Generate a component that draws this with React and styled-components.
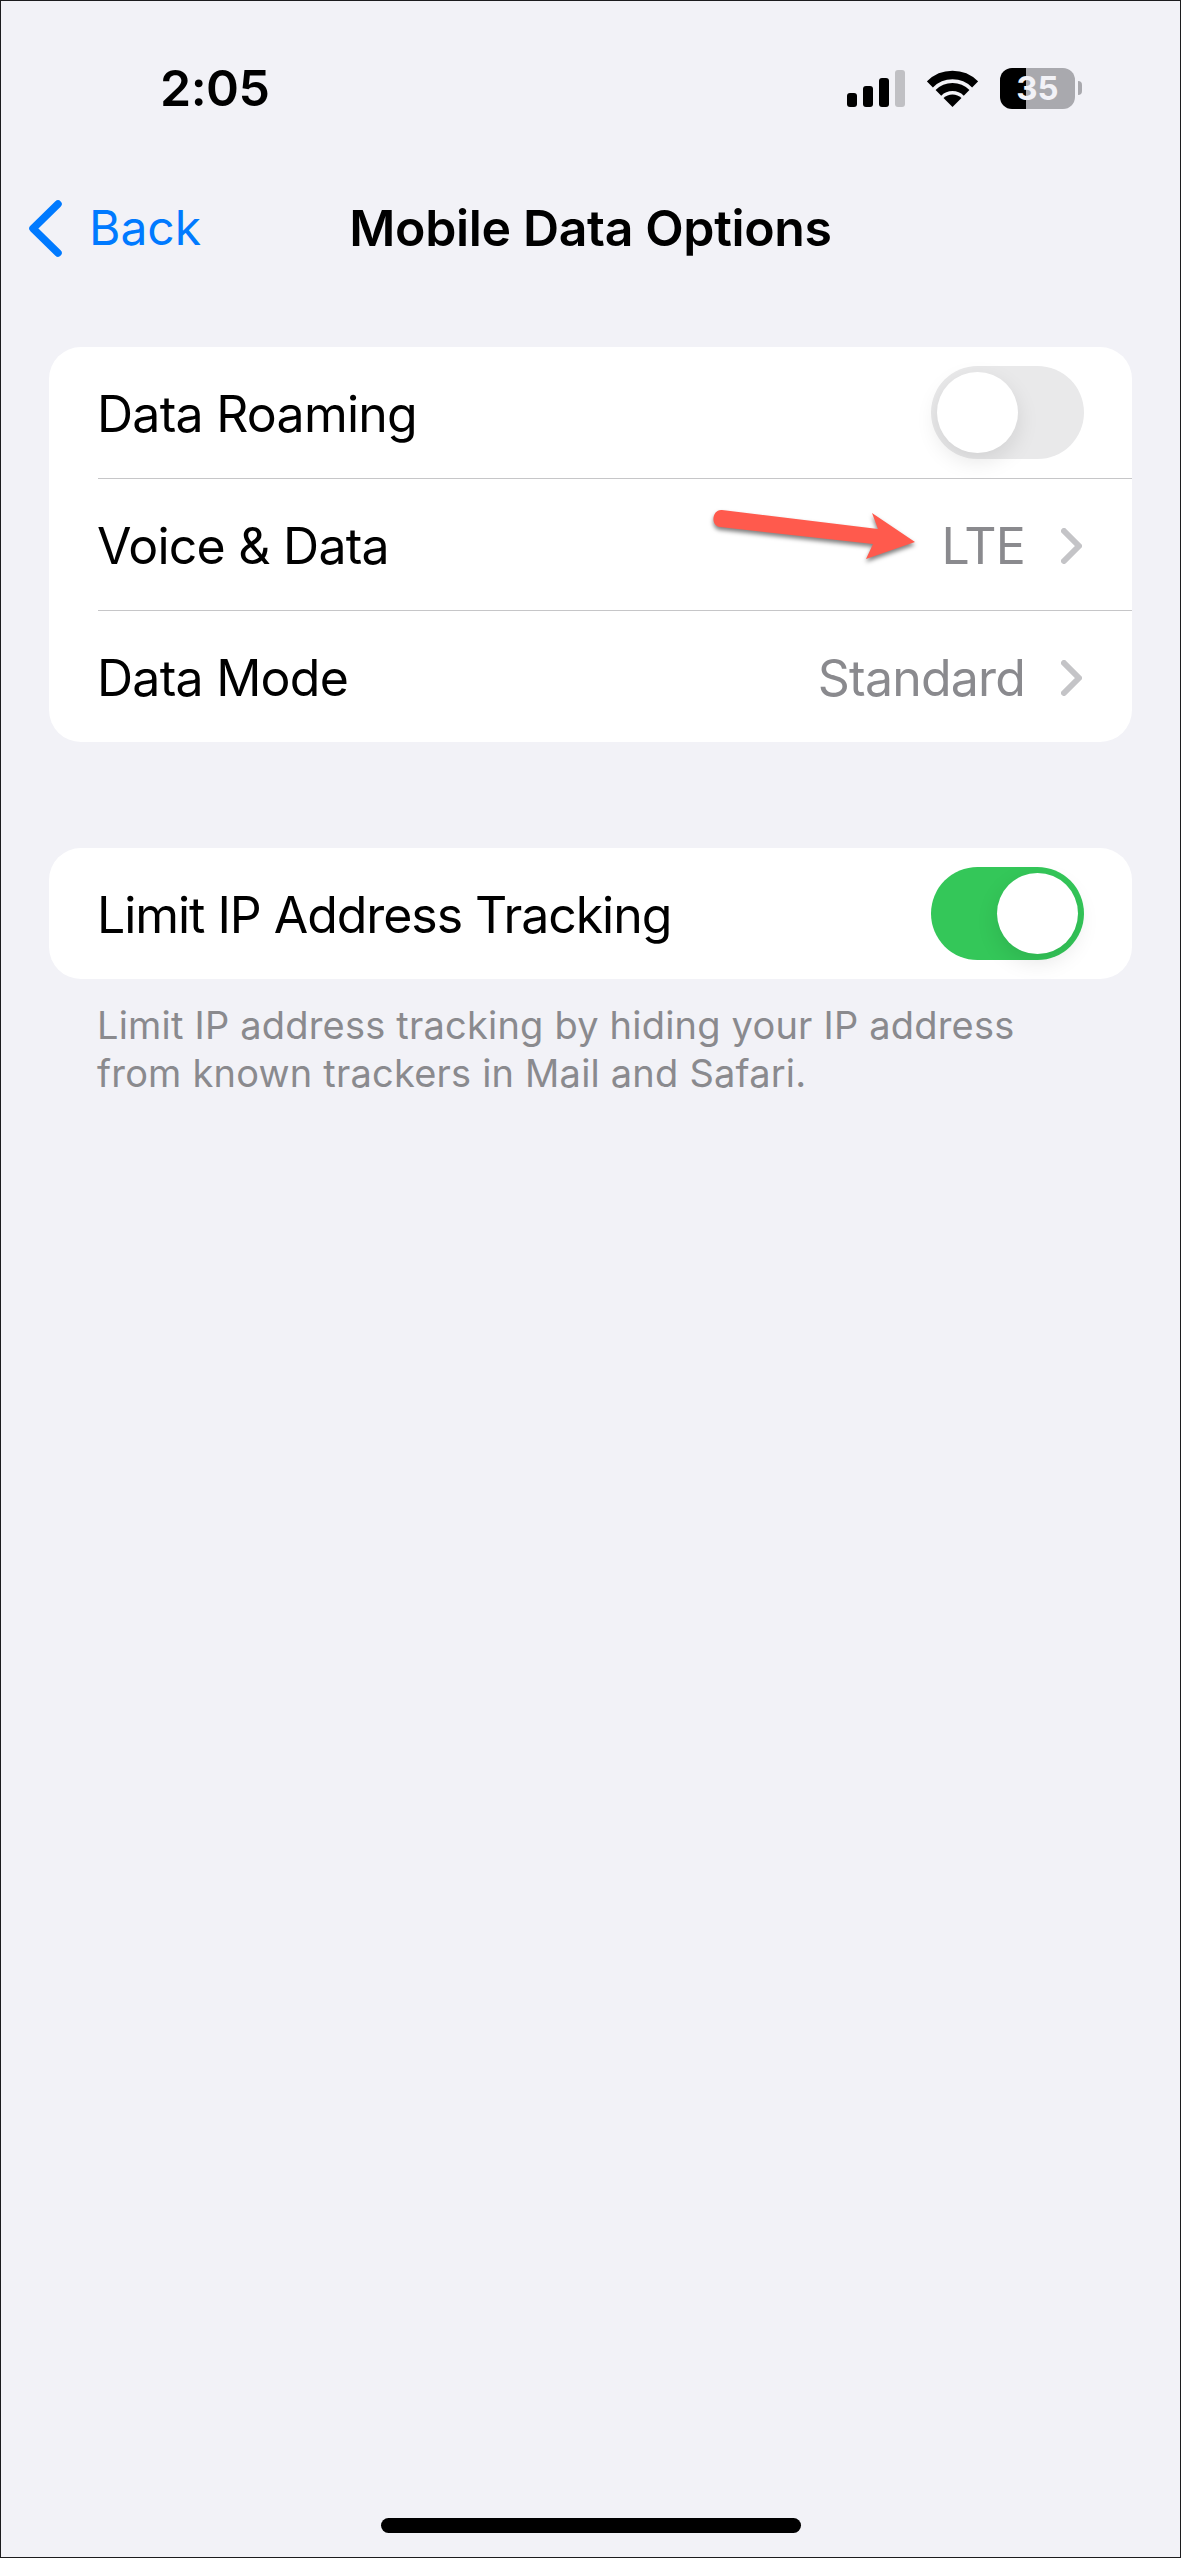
import styled, { createGlobalStyle } from "styled-components";

const GlobalStyle = createGlobalStyle`
  * { box-sizing: border-box; }
  html, body { margin: 0; padding: 0; background: #f2f2f7; }
  body { font-family: Inter, "Liberation Sans", sans-serif; }
`;

const Screen = styled.div`
  width: 1181px;
  height: 2558px;
  border: 1px solid #1c1c1e;
  background: #f2f2f7;
  display: flex;
  flex-direction: column;
  overflow: hidden;
`;

const StatusBar = styled.div`
  height: 174px;
  display: flex;
  align-items: center;
  justify-content: space-between;
  padding: 0 105px 0 159px;
`;

const Time = styled.div`
  font-size: 50px;
  font-weight: 600;
  color: #000;
  letter-spacing: -0.5px;
`;

const StatusIcons = styled.div`
  display: flex;
  align-items: center;
  gap: 22px;
`;

const Battery = styled.div`
  position: relative;
  width: 75px;
  height: 41px;
  border-radius: 12px;
  background: linear-gradient(90deg, #000 0, #000 26px, #a9a9ae 26px);
  color: #f2f2f7;
  font-size: 33px;
  font-weight: 700;
  display: flex;
  align-items: center;
  justify-content: center;

  &::after {
    content: "";
    position: absolute;
    right: -7px;
    top: 13px;
    width: 4px;
    height: 14px;
    border-radius: 0 8px 8px 0;
    background: #a9a9ae;
  }
`;

const NavBar = styled.div`
  position: relative;
  height: 106px;
  display: flex;
  align-items: center;
  justify-content: center;
`;

const BackLink = styled.a`
  position: absolute;
  left: 28px;
  top: 24px;
  display: flex;
  align-items: center;
  gap: 26px;
  color: #007aff;
  font-size: 48px;
  line-height: 58px;
`;

const NavTitle = styled.h1`
  margin: 0;
  font-size: 50px;
  font-weight: 600;
  color: #000;
  letter-spacing: -0.35px;
`;

const Content = styled.main`
  flex: 1;
  display: flex;
  flex-direction: column;
  padding: 66px 48px 0;
`;

const Card = styled.section`
  position: relative;
  background: #fff;
  border-radius: 32px;
  margin-bottom: ${props => props.$gap || 0}px;
`;

const Row = styled.div`
  height: ${props => props.$height || 132}px;
  margin-left: 49px;
  padding-right: 48px;
  display: flex;
  align-items: center;
  justify-content: space-between;
  border-top: ${props => props.$divider ? "1.5px solid #c6c6c8" : "none"};
`;

const Label = styled.span`
  font-size: 50px;
  color: #000;
  letter-spacing: ${props => props.$tight ? "-1.05px" : "-0.75px"};
  margin-left: -1px;
  padding-top: 2px;
`;

const Value = styled.span`
  display: flex;
  align-items: center;
  gap: 36px;
  font-size: 50px;
  color: #8a8a8e;
  letter-spacing: -0.8px;
  margin-right: 2px;
  padding-top: 2px;
`;

const Toggle = styled.div`
  position: relative;
  width: 153px;
  height: 93px;
  border-radius: 47px;
  background: ${props => props.$on ? "#34c759" : "#e9e9ea"};

  &::after {
    content: "";
    position: absolute;
    top: 6px;
    left: ${props => props.$on ? "66px" : "6px"};
    width: 81px;
    height: 81px;
    border-radius: 50%;
    background: #fff;
    box-shadow: 0 8px 22px rgba(0, 0, 0, 0.1);
  }
`;

const Arrow = styled.svg`
  position: absolute;
  left: 660px;
  top: 160px;
  overflow: visible;
  filter: drop-shadow(0 3px 2px rgba(0, 0, 0, 0.5));
`;

const Footnote = styled.p`
  margin: 22px 0 0;
  padding-left: 48px;
  font-size: 38px;
  line-height: 48px;
  letter-spacing: 0.2px;
  color: #8a8a8e;
`;

const HomeIndicator = styled.div`
  width: 420px;
  height: 15px;
  border-radius: 8px;
  background: #000;
  margin: 0 auto 24px;
`;

function SignalIcon() {
  return (
    <svg width="58" height="37" viewBox="0 0 58 37">
      <rect x="0" y="23" width="10" height="14" rx="3" fill="#000" />
      <rect x="16" y="16" width="10" height="21" rx="3" fill="#000" />
      <rect x="32" y="8" width="10" height="29" rx="3" fill="#000" />
      <rect x="48" y="0" width="10" height="37" rx="3" fill="#c0c0c4" />
    </svg>
  );
}

function WifiIcon() {
  return (
    <svg width="51" height="37" viewBox="0 0 51 37">
      <path d="M25.5 37 L16.5 28 A13 13 0 0 1 34.5 28 Z" fill="#000" />
      <path d="M11.4 22.9 A20 20 0 0 1 39.6 22.9" fill="none" stroke="#000" strokeWidth="8" />
      <path d="M2.9 14.4 A32 32 0 0 1 48.1 14.4" fill="none" stroke="#000" strokeWidth="8.5" />
    </svg>
  );
}

function Chevron() {
  return (
    <svg width="21" height="36" viewBox="0 0 21 36">
      <path d="M3 3 L18 18 L3 33" fill="none" stroke="#c4c4c7" strokeWidth="6" strokeLinecap="round" strokeLinejoin="round" />
    </svg>
  );
}

function App() {
  return (
    <Screen>
      <GlobalStyle />
      <StatusBar>
        <Time>2:05</Time>
        <StatusIcons>
          <SignalIcon />
          <WifiIcon />
          <Battery>35</Battery>
        </StatusIcons>
      </StatusBar>

      <NavBar>
        <BackLink>
          <svg width="34" height="57" viewBox="0 0 34 57">
            <path d="M29 4 L4 28.5 L29 53" fill="none" stroke="#007aff" strokeWidth="7.5" strokeLinecap="round" strokeLinejoin="round" />
          </svg>
          Back
        </BackLink>
        <NavTitle>Mobile Data Options</NavTitle>
      </NavBar>

      <Content>
        <Card $gap={106}>
          <Row $height={131}>
            <Label>Data Roaming</Label>
            <Toggle />
          </Row>
          <Row $divider>
            <Label>Voice &amp; Data</Label>
            <Value>LTE <Chevron /></Value>
          </Row>
          <Row $divider>
            <Label>Data Mode</Label>
            <Value>Standard <Chevron /></Value>
          </Row>
          <Arrow width="206" height="52" viewBox="0 0 206 52">
            <path d="M13 3 L169 22 L163 6 L206 35 L157 52 L164 37 L11 20 C1 19 3 2 13 3 Z" fill="#ff5a4d" />
          </Arrow>
        </Card>

        <Card>
          <Row $height={131}>
            <Label $tight>Limit IP Address Tracking</Label>
            <Toggle $on />
          </Row>
        </Card>
        <Footnote>
          Limit IP address tracking by hiding your IP address
          <br />
          from known trackers in Mail and Safari.
        </Footnote>
      </Content>

      <HomeIndicator />
    </Screen>
  );
}

export default App;
